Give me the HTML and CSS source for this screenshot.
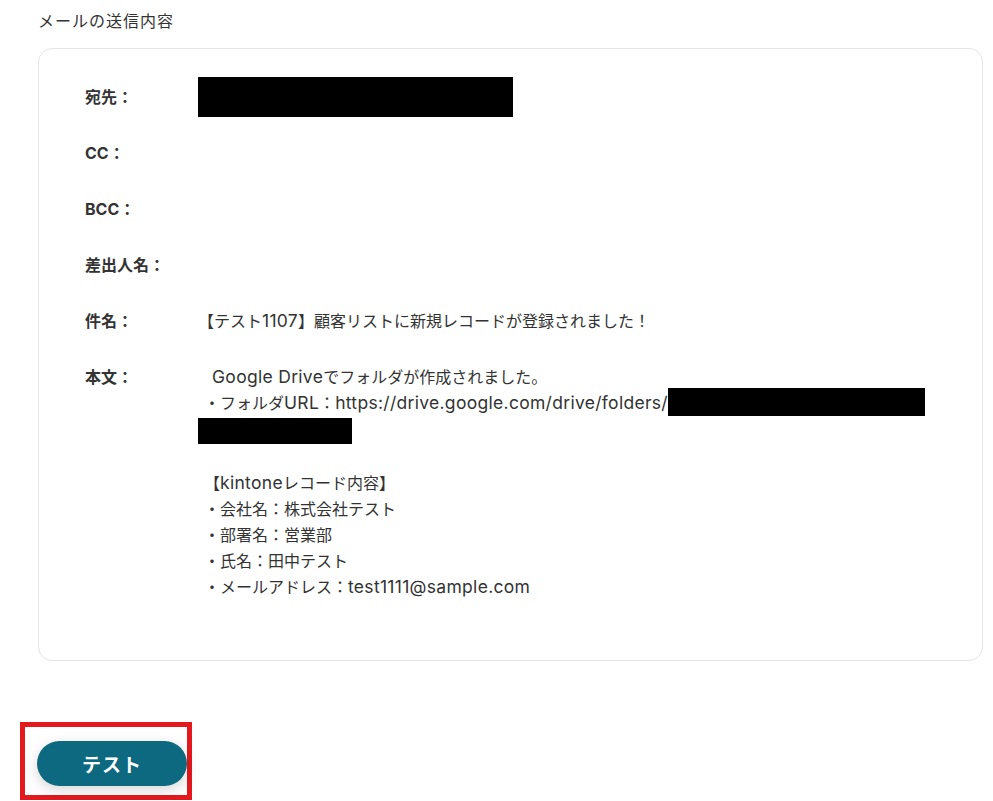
FILE: index.html
```html
<!DOCTYPE html>
<html lang="ja">
<head>
<meta charset="UTF-8" />
<meta name="viewport" content="width=device-width, initial-scale=1.0">
<title>メールの送信内容</title>
<link rel="stylesheet" href="styles.css">
</head>
<body>
<div class="page">
  <div class="section-title">メールの送信内容</div>

  <div class="mail-card">
    <div class="mail-row">
      <div class="mail-label">宛先：</div>
      <div class="mail-value"><span class="redact to-box"></span></div>
    </div>
    <div class="mail-row">
      <div class="mail-label">CC：</div>
      <div class="mail-value"></div>
    </div>
    <div class="mail-row">
      <div class="mail-label">BCC：</div>
      <div class="mail-value"></div>
    </div>
    <div class="mail-row">
      <div class="mail-label">差出人名：</div>
      <div class="mail-value"></div>
    </div>
    <div class="mail-row">
      <div class="mail-label">件名：</div>
      <div class="mail-value text">【テスト<span class="en">1107</span>】顧客リストに新規レコードが登録されました！</div>
    </div>
    <div class="mail-row">
      <div class="mail-label">本文：</div>
      <div class="mail-value text body-text">
        <span class="first-line"><span class="en">Google Drive</span>でフォルダが作成されました。</span><br>
        ・フォルダ<span class="en">URL</span>：<span class="en">https://drive.google.com/drive/folders/</span><span class="redact url-box-1"></span><br>
        <span class="redact url-box-2"></span><br>
        <br>
        【<span class="en">kintone</span>レコード内容】<br>
        ・会社名：株式会社テスト<br>
        ・部署名：営業部<br>
        ・氏名：田中テスト<br>
        ・メールアドレス：<span class="en">test1111@sample.com</span>
      </div>
    </div>
  </div>

  <div class="test-area">
    <button class="test-button">テスト</button>
  </div>
</div>
</body>
</html>
```

FILE: styles.css
```css
body {
  margin: 0;
  font-family: Inter, "Noto Sans CJK JP", sans-serif;
  background-color: #fff;
  color: #333;
}
.page {
  padding: 8px 10px 0 38px;
}
.section-title {
  font-size: 16px;
  letter-spacing: 1px;
  line-height: 26px;
  margin-bottom: 14px;
}
.mail-card {
  border: 1px solid #e4e4e4;
  border-radius: 14px;
  padding: 28px 46px 60px;
  display: flex;
  flex-direction: column;
  gap: 16px;
}
.mail-row {
  display: grid;
  grid-template-columns: 113px 1fr;
  min-height: 40px;
  align-items: start;
}
.mail-label {
  font-size: 16px;
  font-weight: bold;
  line-height: 26px;
  padding-top: 7px;
}
.mail-value {
  font-size: 16px;
  line-height: 26px;
}
.mail-value.text {
  padding-top: 7px;
}
.mail-value .en {
  font-size: 17.5px;
  letter-spacing: 0.3px;
}
.body-text {
  padding-left: 6px;
}
.first-line {
  padding-left: 8px;
}
.redact {
  display: inline-block;
  background-color: #000;
  vertical-align: top;
}
.to-box {
  width: 315px;
  height: 40px;
}
.url-box-1 {
  width: 257px;
  height: 28px;
  margin-top: -2px;
}
.url-box-2 {
  width: 154px;
  height: 26px;
  margin: 2px 0 0 -6px;
}
.test-area {
  display: inline-block;
  margin: 61px 0 0 -18px;
  border: 5px solid #e3191e;
  padding: 14px 0 9px 12px;
}
.test-button {
  display: block;
  width: 150px;
  height: 45px;
  border: none;
  border-radius: 23px;
  background-color: #0d6980;
  color: #fff;
  font-family: Inter, "Noto Sans CJK JP", sans-serif;
  font-size: 19px;
  font-weight: bold;
  letter-spacing: 1px;
  box-shadow: 0 4px 14px rgba(0,0,0,0.16);
}
```
